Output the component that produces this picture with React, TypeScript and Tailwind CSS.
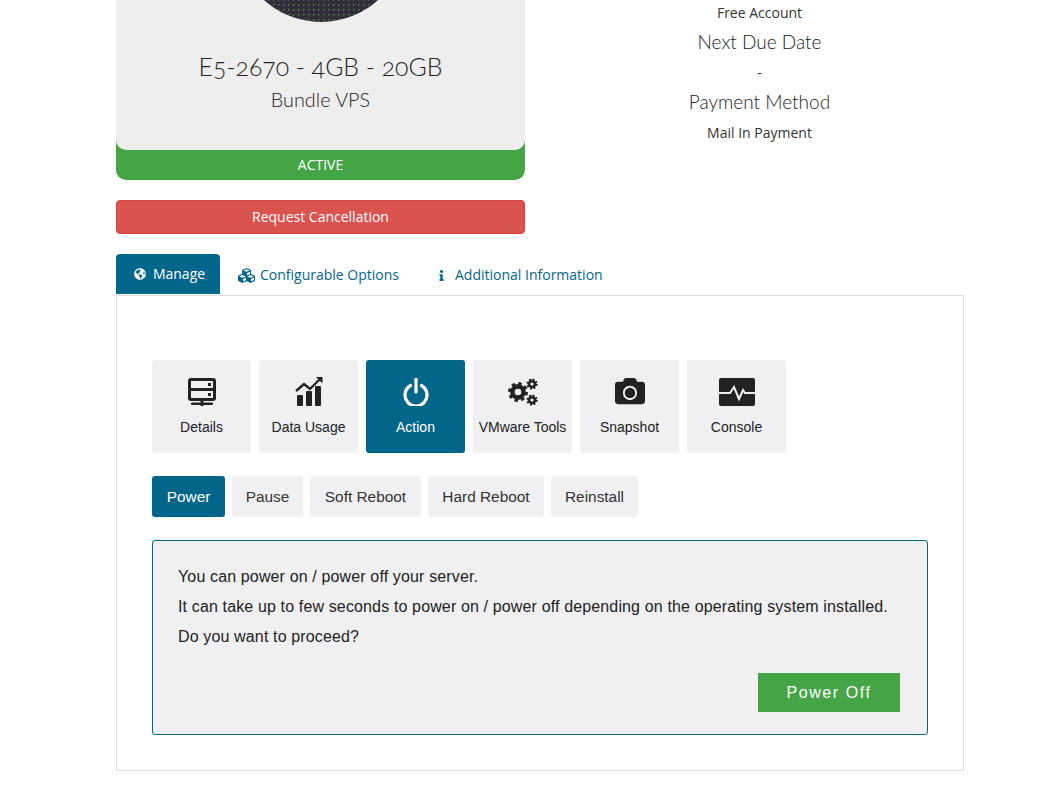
import { FaCamera, FaCubes, FaGlobeAmericas, FaInfo } from "react-icons/fa";

const HEADING = "font-['Lato','Noto_Sans',sans-serif] font-light oldstyle-nums";

function ServerIcon() {
  return (
    <svg width="28" height="28" viewBox="0 0 28 28" fill="#222">
      <rect width="28" height="23" rx="3" />
      <rect x="3" y="3" width="22" height="7" fill="#f0f0f2" />
      <rect x="3" y="13" width="22" height="7" fill="#f0f0f2" />
      <rect x="20" y="5" width="3" height="3" />
      <rect x="20" y="15" width="3" height="3" />
      <rect x="12.5" y="23" width="3" height="5" />
      <rect x="3" y="24.5" width="22" height="2.6" rx="1" />
    </svg>
  );
}

function ChartIcon() {
  return (
    <svg width="28" height="29" viewBox="0 0 28 29" fill="#222">
      <path d="M1 14 L9 7 L15 12 L25 2" fill="none" stroke="#222" strokeWidth="2.4" />
      <path d="M21 0h6.5v6.5Z" />
      <rect x="2" y="18" width="6" height="11" rx="1" />
      <rect x="11" y="14" width="6" height="15" rx="1" />
      <rect x="20" y="9" width="6" height="20" rx="1" />
    </svg>
  );
}

function PowerIcon() {
  return (
    <svg width="26" height="28" viewBox="0 0 26 28" fill="none" stroke="#fff" strokeWidth="3.2">
      <path d="M7.5 7.5a11 11 0 1 0 11 0" strokeLinecap="round" />
      <path d="M13 1v13" strokeLinecap="round" />
    </svg>
  );
}

function Gear({ cx, cy, r, w }: { cx: number; cy: number; r: number; w: number }) {
  const circ = 2 * Math.PI * (r + w / 2);
  return (
    <g fill="none" stroke="#222">
      <circle cx={cx} cy={cy} r={r} strokeWidth={w} />
      <circle cx={cx} cy={cy} r={r + w / 2} strokeWidth={w * 0.9} strokeDasharray={`${circ / 16} ${circ / 16}`} />
    </g>
  );
}

function CogsIcon() {
  return (
    <svg width="30" height="28" viewBox="0 0 30 28">
      <Gear cx={10} cy={14} r={5.6} w={4.6} />
      <Gear cx={24} cy={6} r={3} w={2.8} />
      <Gear cx={24} cy={22} r={3} w={2.8} />
    </svg>
  );
}

function ConsoleIcon() {
  return (
    <svg width="36" height="28" viewBox="0 0 36 28" fill="#222">
      <rect width="36" height="28" rx="2" />
      <path d="M0 15h11l4-6 5 12 4-9 2 3h10" fill="none" stroke="#f0f0f2" strokeWidth="2" />
    </svg>
  );
}

const tiles = [
  { label: "Details", icon: <ServerIcon /> },
  { label: "Data Usage", icon: <ChartIcon /> },
  { label: "Action", icon: <PowerIcon />, active: true },
  { label: "VMware Tools", icon: <CogsIcon /> },
  { label: "Snapshot", icon: <FaCamera className="text-[#222]" size={30} /> },
  { label: "Console", icon: <ConsoleIcon /> },
];

const actions = [
  { label: "Power", width: "w-[73px]", active: true },
  { label: "Pause", width: "w-[71px]" },
  { label: "Soft Reboot", width: "w-[111px]" },
  { label: "Hard Reboot", width: "w-[116px]" },
  { label: "Reinstall", width: "w-[87px]" },
];

export default function App() {
  return (
    <div className="h-[788px] overflow-hidden bg-white font-['Open_Sans',sans-serif] text-[#333]">
      <div className="ml-[116px] w-[848px]">
        <div className="grid grid-cols-2 gap-[30px]">
          {/* Product card */}
          <div>
            <div className="flex h-[180px] flex-col rounded-b-[10px] bg-[#45a546]">
              <div className="flex h-[150px] flex-col items-center overflow-hidden rounded-b-[10px] bg-[#eeeeee]">
                <div className="mt-[-148px] size-[170px] shrink-0 rounded-full bg-[#2f2e3a] bg-[radial-gradient(circle,#4d6a4e_1px,transparent_1px)] bg-[length:5px_5px]" />
                <h3 className={`${HEADING} mt-[28px] text-[24.8px] leading-[34px] text-[#222]`}>
                  E5-2670 - 4GB - 20GB
                </h3>
                <h4 className={`${HEADING} mt-[2px] text-[19.8px] leading-[26px] text-[#222]`}>
                  Bundle VPS
                </h4>
              </div>
              <div className="flex h-[30px] items-center justify-center text-sm text-white">ACTIVE</div>
            </div>
            <button className="mt-[20px] h-[34px] w-full rounded-[4px] border border-[#d43f3a] bg-[#d9534f] text-sm text-white">
              Request Cancellation
            </button>
          </div>

          {/* Billing info */}
          <div className="text-center">
            <p className="mt-[3px] text-sm leading-[20px]">Free Account</p>
            <p className={`${HEADING} mt-[6px] text-[19px] leading-[26px] text-[#222]`}>Next Due Date</p>
            <p className="mt-[8px] text-sm leading-[20px]">-</p>
            <p className={`${HEADING} mt-[6px] text-[19px] leading-[26px] text-[#222]`}>Payment Method</p>
            <p className="mt-[8px] text-sm leading-[20px]">Mail In Payment</p>
          </div>
        </div>

        {/* Tabs */}
        <div className="mt-[20px] flex h-[41px] text-sm text-[#02658a]">
          <div className="flex h-[40px] w-[104px] items-center justify-center gap-[7px] rounded-t-[4px] bg-[#02658a] pl-[3px] text-white">
            <FaGlobeAmericas size={12} />
            Manage
          </div>
          <div className="ml-[18px] flex h-[42px] items-center gap-[5px]">
            <FaCubes size={17} />
            Configurable Options
          </div>
          <div className="ml-[37px] flex h-[42px] items-center gap-[8px]">
            <FaInfo size={11} />
            Additional Information
          </div>
        </div>

        {/* Panel */}
        <div className="h-[476px] border border-[#dddddd] px-[35px] pt-[64px] font-['Liberation_Sans',sans-serif]">
          <div className="flex gap-[8px]">
            {tiles.map((tile) => (
              <div
                key={tile.label}
                className={`flex h-[93px] w-[99px] flex-col items-center rounded-[3px] text-sm ${
                  tile.active ? "bg-[#02658a] text-white" : "bg-[#f0f0f2] text-[#222]"
                }`}
              >
                <div className="flex h-[46px] w-full items-end justify-center">{tile.icon}</div>
                <span className="mt-[11px] leading-[20px]">{tile.label}</span>
              </div>
            ))}
          </div>

          <div className="mt-[23px] flex gap-[7px]">
            {actions.map((action) => (
              <div
                key={action.label}
                className={`flex h-[41px] items-center justify-center rounded-[3px] text-[15.4px] ${action.width} ${
                  action.active ? "bg-[#02658a] text-white" : "bg-[#f0f0f2] text-[#333]"
                }`}
              >
                {action.label}
              </div>
            ))}
          </div>

          <div className="mt-[23px] h-[195px] rounded-[3px] border border-[#02658a] bg-[#f0f0f2] pl-[25px] pr-[27px] pt-[21px] text-[#222]">
            <p className="text-base leading-[30px] tracking-[0.14px]">You can power on / power off your server.</p>
            <p className="text-base leading-[30px] tracking-[0.14px]">
              It can take up to few seconds to power on / power off depending on the operating system installed.
            </p>
            <p className="text-base leading-[30px] tracking-[0.14px]">Do you want to proceed?</p>
            <div className="mt-[21px] flex justify-end">
              <button className="h-[39px] w-[142px] bg-[#45a546] pt-[1px] text-base tracking-[1.6px] text-white">Power Off</button>
            </div>
          </div>
        </div>
      </div>
    </div>
  );
}
